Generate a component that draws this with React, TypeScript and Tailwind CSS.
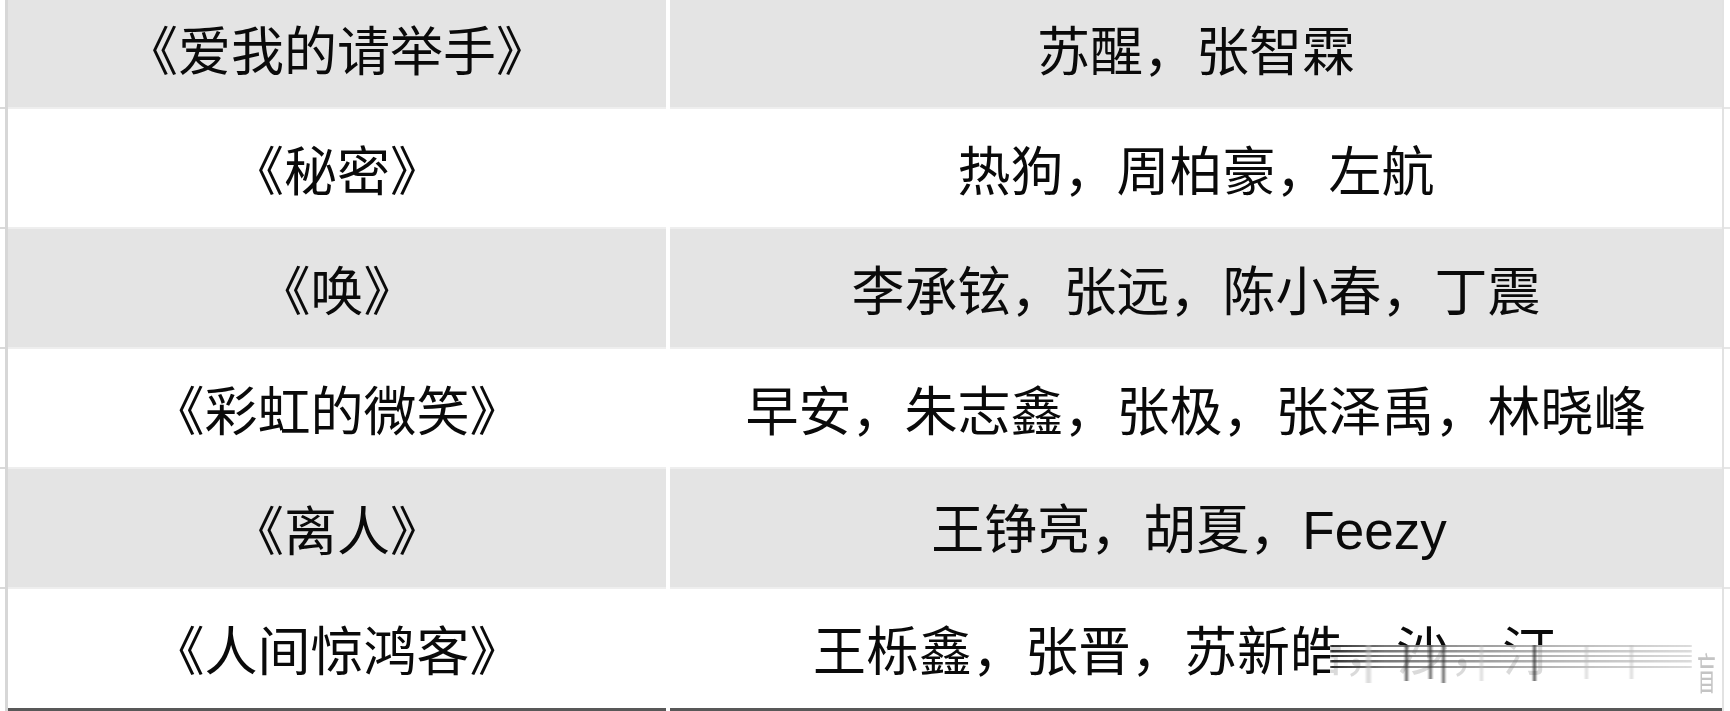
import React from "react";

type Row = { song: string; cast: React.ReactNode; gray: boolean; shift?: string };

const ROWS: Row[] = [
	{ song: "《爱我的请举手》", cast: "苏醒，张智霖", gray: true },
	{ song: "《秘密》", cast: "热狗，周柏豪，左航", gray: false },
	{ song: "《唤》", cast: "李承铉，张远，陈小春，丁震", gray: true },
	{ song: "《彩虹的微笑》", cast: "早安，朱志鑫，张极，张泽禹，林晓峰", gray: false },
	{
		song: "《离人》",
		cast: (
			<>
				王铮亮，胡夏，
				<span className="font-['Liberation_Sans',sans-serif]">Feezy</span>
			</>
		),
		gray: true,
		shift: "pr-[14px]",
	},
	{ song: "《人间惊鸿客》", cast: "王栎鑫，张晋，苏新皓，沙，汀", gray: false, shift: "pr-[24px]" },
];

export default function App() {
	return (
		<div className="flex h-[711px] w-[1730px] overflow-hidden bg-white font-['Noto_Sans_CJK_SC',sans-serif] text-[53px] leading-none text-[#0a0a0a]">
			{/* left gutter with row ticks */}
			<div className="mt-[-11px] flex w-[5px] flex-col">
				{ROWS.map((r, i) => (
					<div
						key={i}
						className={i === ROWS.length - 1 ? "h-[122px]" : "h-[120px] border-b-2 border-[#d9d9d9]"}
					/>
				))}
			</div>
			<div className="w-[3px] bg-[#d7d7d7]" />

			{/* table */}
			<div className="mt-[-11px] flex w-[1714px] flex-col">
				{ROWS.map((r, i) => {
					const last = i === ROWS.length - 1;
					const cell = `relative flex items-center justify-center ${
						r.gray ? "bg-[#e4e4e4]" : "bg-white"
					} ${last ? "h-[122px] border-b-[3px] border-[#585858]" : "h-[120px] border-b-2 border-[#eeeeee]"}`;
					return (
						<div key={i} className="grid grid-cols-[658px_1052px] gap-x-[4px]">
							<div className={cell}>{r.song}</div>
							<div className={cell}>
								<span className={r.shift ?? ""}>{r.cast}</span>
								{last && <Watermark />}
							</div>
						</div>
					);
				})}
			</div>

			<div className="w-[2px] bg-[#e2e2e2]" />
			<div className="mt-[-11px] flex w-[6px] flex-col">
				{ROWS.map((r, i) => (
					<div
						key={i}
						className={i === ROWS.length - 1 ? "h-[122px]" : "h-[120px] border-b-2 border-[#e6e6e6]"}
					/>
				))}
			</div>
		</div>
	);
}

function Watermark() {
	return (
		<>
			<div className="absolute left-[660px] top-[56px] h-[50px] w-[362px] bg-white/85">
				<svg width="362" height="50" viewBox="0 0 362 50">
					<defs>
						<filter id="wm-blur" x="-5%" y="-50%" width="110%" height="200%">
							<feGaussianBlur stdDeviation="1.2 0.6" />
						</filter>
						<linearGradient id="wm-fade" x1="0" y1="0" x2="1" y2="0">
							<stop offset="0" stopColor="#222" stopOpacity="0.95" />
							<stop offset="0.15" stopColor="#555" stopOpacity="0.8" />
							<stop offset="0.6" stopColor="#777" stopOpacity="0.55" />
							<stop offset="1" stopColor="#999" stopOpacity="0.35" />
						</linearGradient>
					</defs>
					<g filter="url(#wm-blur)" fill="url(#wm-fade)">
						<rect x="0" y="0" width="362" height="2" />
						<rect x="0" y="5" width="362" height="2.5" />
						<rect x="0" y="10" width="362" height="2" />
						<rect x="0" y="15" width="362" height="2.5" />
						<rect x="0" y="21" width="362" height="2" />
					</g>
					<g filter="url(#wm-blur)" fill="#333">
						<rect x="75" y="0" width="3" height="36" opacity="0.75" />
						<rect x="99" y="0" width="3" height="34" opacity="0.7" />
						<rect x="112" y="0" width="3" height="38" opacity="0.7" />
						<rect x="203" y="0" width="3" height="36" opacity="0.8" />
					</g>
					<g filter="url(#wm-blur)" fill="#bbb" opacity="0.5">
						<rect x="36" y="0" width="5" height="38" />
						<rect x="150" y="0" width="3" height="36" />
						<rect x="255" y="0" width="3" height="34" />
						<rect x="300" y="0" width="3" height="34" />
					</g>
				</svg>
			</div>
			<span className="absolute left-[1027px] top-[60px] inline-block origin-top scale-y-[2.3] text-[19px] text-[#c4c4c4]">
				盲
			</span>
		</>
	);
}
